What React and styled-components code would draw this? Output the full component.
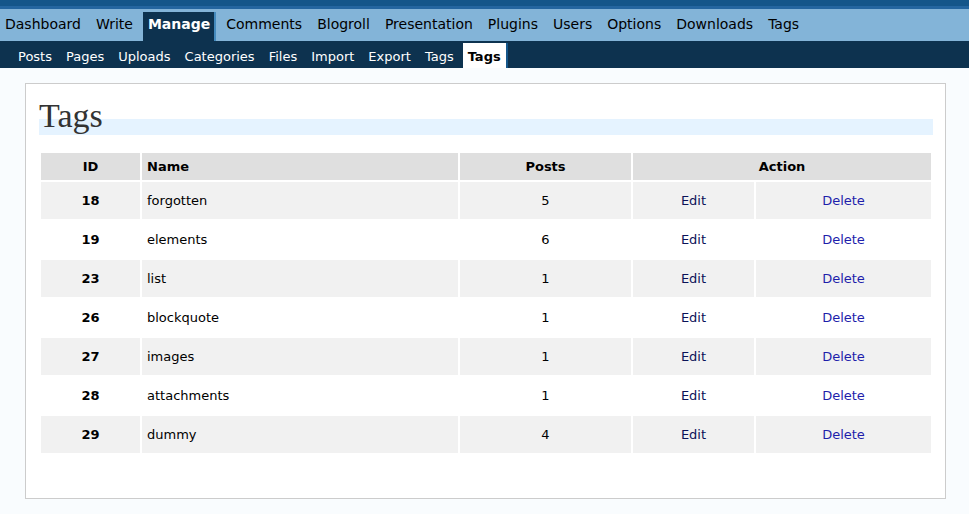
import React from 'react';
import styled, { createGlobalStyle } from 'styled-components';

const GlobalStyle = createGlobalStyle`
  body {
    margin: 0;
    background: #f9fcfe;
    font-family: "DejaVu Sans", Verdana, sans-serif;
    color: #333;
  }
`;

const TopStrip = styled.div`
  height: 6px;
  background: #14568a;
  border-bottom: 3px solid #2466a0;
`;

const MainMenu = styled.ul`
  display: flex;
  align-items: flex-end;
  gap: 5px;
  margin: 0;
  padding: 3px 0 0;
  height: 29px;
  background: #83b4d8;
  list-style: none;
`;

const MainItem = styled.li`
  display: flex;
  align-items: center;
  height: 29px;
  padding: 0 ${p => (p.$active ? '4px' : '5px')} 5px 5px;
  box-sizing: border-box;
  font-size: 14px;
  font-weight: ${p => (p.$active ? 'bold' : 'normal')};
  color: ${p => (p.$active ? '#fff' : '#000')};
  background: ${p => (p.$active ? '#0d324f' : 'transparent')};
  border-right: ${p => (p.$active ? '2px solid #448abd' : 'none')};
  cursor: pointer;
`;

const SubMenu = styled.ul`
  display: flex;
  align-items: flex-end;
  gap: 4px;
  margin: 0;
  padding: 0 0 0 13px;
  height: 27px;
  background: #0d324f;
  list-style: none;
`;

const SubItem = styled.li`
  display: flex;
  align-items: center;
  height: 25px;
  padding: 1px 5px 0;
  box-sizing: border-box;
  font-size: 13px;
  font-weight: ${p => (p.$active ? 'bold' : 'normal')};
  color: ${p => (p.$active ? '#000' : '#fff')};
  background: ${p => (p.$active ? '#fff' : 'transparent')};
  border-right: ${p => (p.$active ? '2px solid #14568a' : 'none')};
  cursor: pointer;
`;

const Wrap = styled.div`
  box-sizing: border-box;
  width: 921px;
  margin: 15px 0 0 25px;
  padding: 14px 12px 43px 13px;
  background: #fff;
  border: 1px solid #ccc;
`;

const Heading = styled.h2`
  margin: 0;
  height: 37px;
  font-family: "Liberation Serif", "DejaVu Serif", serif;
  font-size: 34px;
  font-weight: normal;
  line-height: 36px;
  color: #333;
  background: linear-gradient(to bottom, transparent 21px, #e5f3ff 21px);
`;

const Table = styled.table`
  width: 100%;
  margin-top: 16px;
  border-spacing: 2px;
  table-layout: fixed;
  font-size: 13px;
`;

const Th = styled.th`
  height: 27px;
  padding: 0 5px;
  background: #dfdfdf;
  color: #000;
  font-weight: bold;
  text-align: ${p => p.$align || 'center'};
`;

const Row = styled.tr`
  background: ${p => (p.$alt ? '#f1f1f1' : 'transparent')};
`;

const Td = styled.td`
  height: 37px;
  padding: 0 5px;
  color: #000;
  font-weight: ${p => (p.$bold ? 'bold' : 'normal')};
  text-align: ${p => p.$align || 'center'};
`;

const ActionLink = styled.a`
  display: block;
  text-decoration: none;
  color: ${p => (p.$danger ? '#1e1eab' : '#0b1258')};
  cursor: pointer;
`;

const mainItems = ['Dashboard', 'Write', 'Manage', 'Comments', 'Blogroll', 'Presentation', 'Plugins', 'Users', 'Options', 'Downloads', 'Tags'];
const subItems = ['Posts', 'Pages', 'Uploads', 'Categories', 'Files', 'Import', 'Export', 'Tags', 'Tags'];

const tags = [
  { id: 18, name: 'forgotten', posts: 5 },
  { id: 19, name: 'elements', posts: 6 },
  { id: 23, name: 'list', posts: 1 },
  { id: 26, name: 'blockquote', posts: 1 },
  { id: 27, name: 'images', posts: 1 },
  { id: 28, name: 'attachments', posts: 1 },
  { id: 29, name: 'dummy', posts: 4 },
];

export default function App() {
  return (
    <>
      <GlobalStyle />
      <TopStrip />
      <MainMenu>
        {mainItems.map(item => (
          <MainItem key={item} $active={item === 'Manage'}>{item}</MainItem>
        ))}
      </MainMenu>
      <SubMenu>
        {subItems.map((item, i) => (
          <SubItem key={i} $active={i === subItems.length - 1}>{item}</SubItem>
        ))}
      </SubMenu>
      <Wrap>
        <Heading>Tags</Heading>
        <Table>
          <colgroup>
            <col style={{ width: 99 }} />
            <col style={{ width: 316 }} />
            <col style={{ width: 171 }} />
            <col style={{ width: 121 }} />
            <col />
          </colgroup>
          <thead>
            <tr>
              <Th>ID</Th>
              <Th $align="left">Name</Th>
              <Th>Posts</Th>
              <Th colSpan={2}>Action</Th>
            </tr>
          </thead>
          <tbody>
            {tags.map((tag, i) => (
              <Row key={tag.id} $alt={i % 2 === 0}>
                <Td $bold>{tag.id}</Td>
                <Td $align="left">{tag.name}</Td>
                <Td>{tag.posts}</Td>
                <Td><ActionLink>Edit</ActionLink></Td>
                <Td><ActionLink $danger>Delete</ActionLink></Td>
              </Row>
            ))}
          </tbody>
        </Table>
      </Wrap>
    </>
  );
}
